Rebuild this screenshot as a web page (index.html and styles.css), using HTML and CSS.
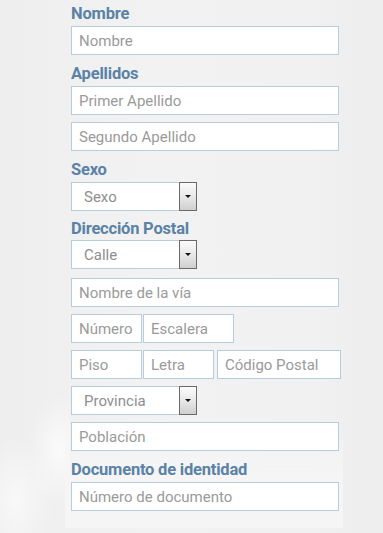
FILE: index.html
```html
<!DOCTYPE html>
<html lang="es">
<head>
<meta charset="utf-8">
<title>Formulario</title>
<link rel="stylesheet" href="styles.css">
</head>
<body>
<div class="scene">
  <div class="backdrop"></div>
  <form class="panel">
    <div class="group">
      <label class="lbl">Nombre</label>
      <div class="field full"><span class="ph">Nombre</span></div>
    </div>
    <div class="group">
      <label class="lbl">Apellidos</label>
      <div class="field full"><span class="ph">Primer Apellido</span></div>
      <div class="field full"><span class="ph">Segundo Apellido</span></div>
    </div>
    <div class="group">
      <label class="lbl">Sexo</label>
      <div class="select"><span class="sel-text">Sexo</span><span class="drop"><span class="tri"></span></span></div>
    </div>
    <div class="group">
      <label class="lbl lbl-tight">Dirección Postal</label>
      <div class="select"><span class="sel-text">Calle</span><span class="drop"><span class="tri"></span></span></div>
      <div class="field full gap-extra"><span class="ph">Nombre de la vía</span></div>
      <div class="row">
        <div class="field w-num"><span class="ph">Número</span></div>
        <div class="field w-esc"><span class="ph">Escalera</span></div>
      </div>
      <div class="row">
        <div class="field w-num"><span class="ph">Piso</span></div>
        <div class="field w-let"><span class="ph">Letra</span></div>
        <div class="field w-cp"><span class="ph">Código Postal</span></div>
      </div>
      <div class="select"><span class="sel-text">Provincia</span><span class="drop"><span class="tri"></span></span></div>
      <div class="field full"><span class="ph">Población</span></div>
    </div>
    <div class="group">
      <label class="lbl">Documento de identidad</label>
      <div class="field full"><span class="ph">Número de documento</span></div>
    </div>
  </form>
</div>
</body>
</html>
```
FILE: styles.css
```css
html, body {
  margin: 0;
  padding: 0;
}
body {
  background: #efefef;
  font-family: Roboto, "Open Sans", "Liberation Sans", sans-serif;
  width: 383px;
  height: 533px;
  overflow: hidden;
}
.scene {
  position: relative;
  width: 383px;
  height: 533px;
  background: linear-gradient(90deg, #eeeeee 0%, #f2f2f2 40%, #f1f1f1 80%, #ededed 100%);
}
.backdrop {
  position: absolute;
  left: 0;
  top: 380px;
  width: 70px;
  height: 153px;
  background:
    radial-gradient(ellipse 40px 70px at 60px 70px, rgba(255,255,255,0.7), rgba(255,255,255,0) 80%),
    radial-gradient(ellipse 50px 80px at 15px 120px, rgba(255,255,255,0.6), rgba(255,255,255,0) 80%);
}
.panel {
  position: relative;
  z-index: 0;
  margin: 0 0 0 65px;
  width: 278px;
  box-sizing: border-box;
  padding: 2px 0 17px 6px;
  display: flex;
  flex-direction: column;
  gap: 7px;
}
.panel::before {
  content: "";
  position: absolute;
  left: 0;
  right: 0;
  top: 420px;
  bottom: 0;
  z-index: -1;
  background: #f5f5f5;
  box-shadow: 2px 3px 5px rgba(0,0,0,0.18);
  -webkit-mask-image: linear-gradient(180deg, transparent 0%, #000 55%);
  mask-image: linear-gradient(180deg, transparent 0%, #000 55%);
}
.group {
  display: flex;
  flex-direction: column;
  gap: 7px;
}
.lbl {
  display: block;
  height: 24px;
  margin-bottom: -7px;
  font-weight: 700;
  font-size: 16.5px;
  line-height: 24px;
  color: #5a82a6;
  letter-spacing: -0.2px;
}
.lbl-tight {
  height: 22px;
  line-height: 22px;
}
.gap-extra { margin-top: 2px; }
.field {
  box-sizing: border-box;
  height: 29px;
  background: #ffffff;
  border: 1px solid #b9ccdd;
  padding: 0 7px;
  display: flex;
  align-items: center;
  overflow: hidden;
  white-space: nowrap;
}
.full { width: 268px; }
.ph {
  color: #9a9a9a;
  font-size: 15px;
}
.row {
  display: flex;
  gap: 1px;
}
.w-num { width: 71px; }
.w-esc { width: 91px; }
.w-let { width: 71px; margin-right: 2px; }
.w-cp { width: 124px; }
.select {
  box-sizing: border-box;
  width: 126px;
  height: 29px;
  background: #ffffff;
  border: 1px solid #b9ccdd;
  display: flex;
  align-items: center;
  justify-content: space-between;
  padding: 0 0 0 12px;
}
.sel-text {
  color: #8e8e8e;
  font-size: 15px;
}
.drop {
  box-sizing: border-box;
  width: 18px;
  height: 29px;
  margin-right: -1px;
  border: 1px solid #6a6a6a;
  background: linear-gradient(180deg, #fbfbfb 0%, #e6e6e6 55%, #cfcfcf 100%);
  display: flex;
  align-items: center;
  justify-content: center;
}
.tri {
  width: 0;
  height: 0;
  border-left: 3px solid transparent;
  border-right: 3px solid transparent;
  border-top: 3px solid #111;
}
```
